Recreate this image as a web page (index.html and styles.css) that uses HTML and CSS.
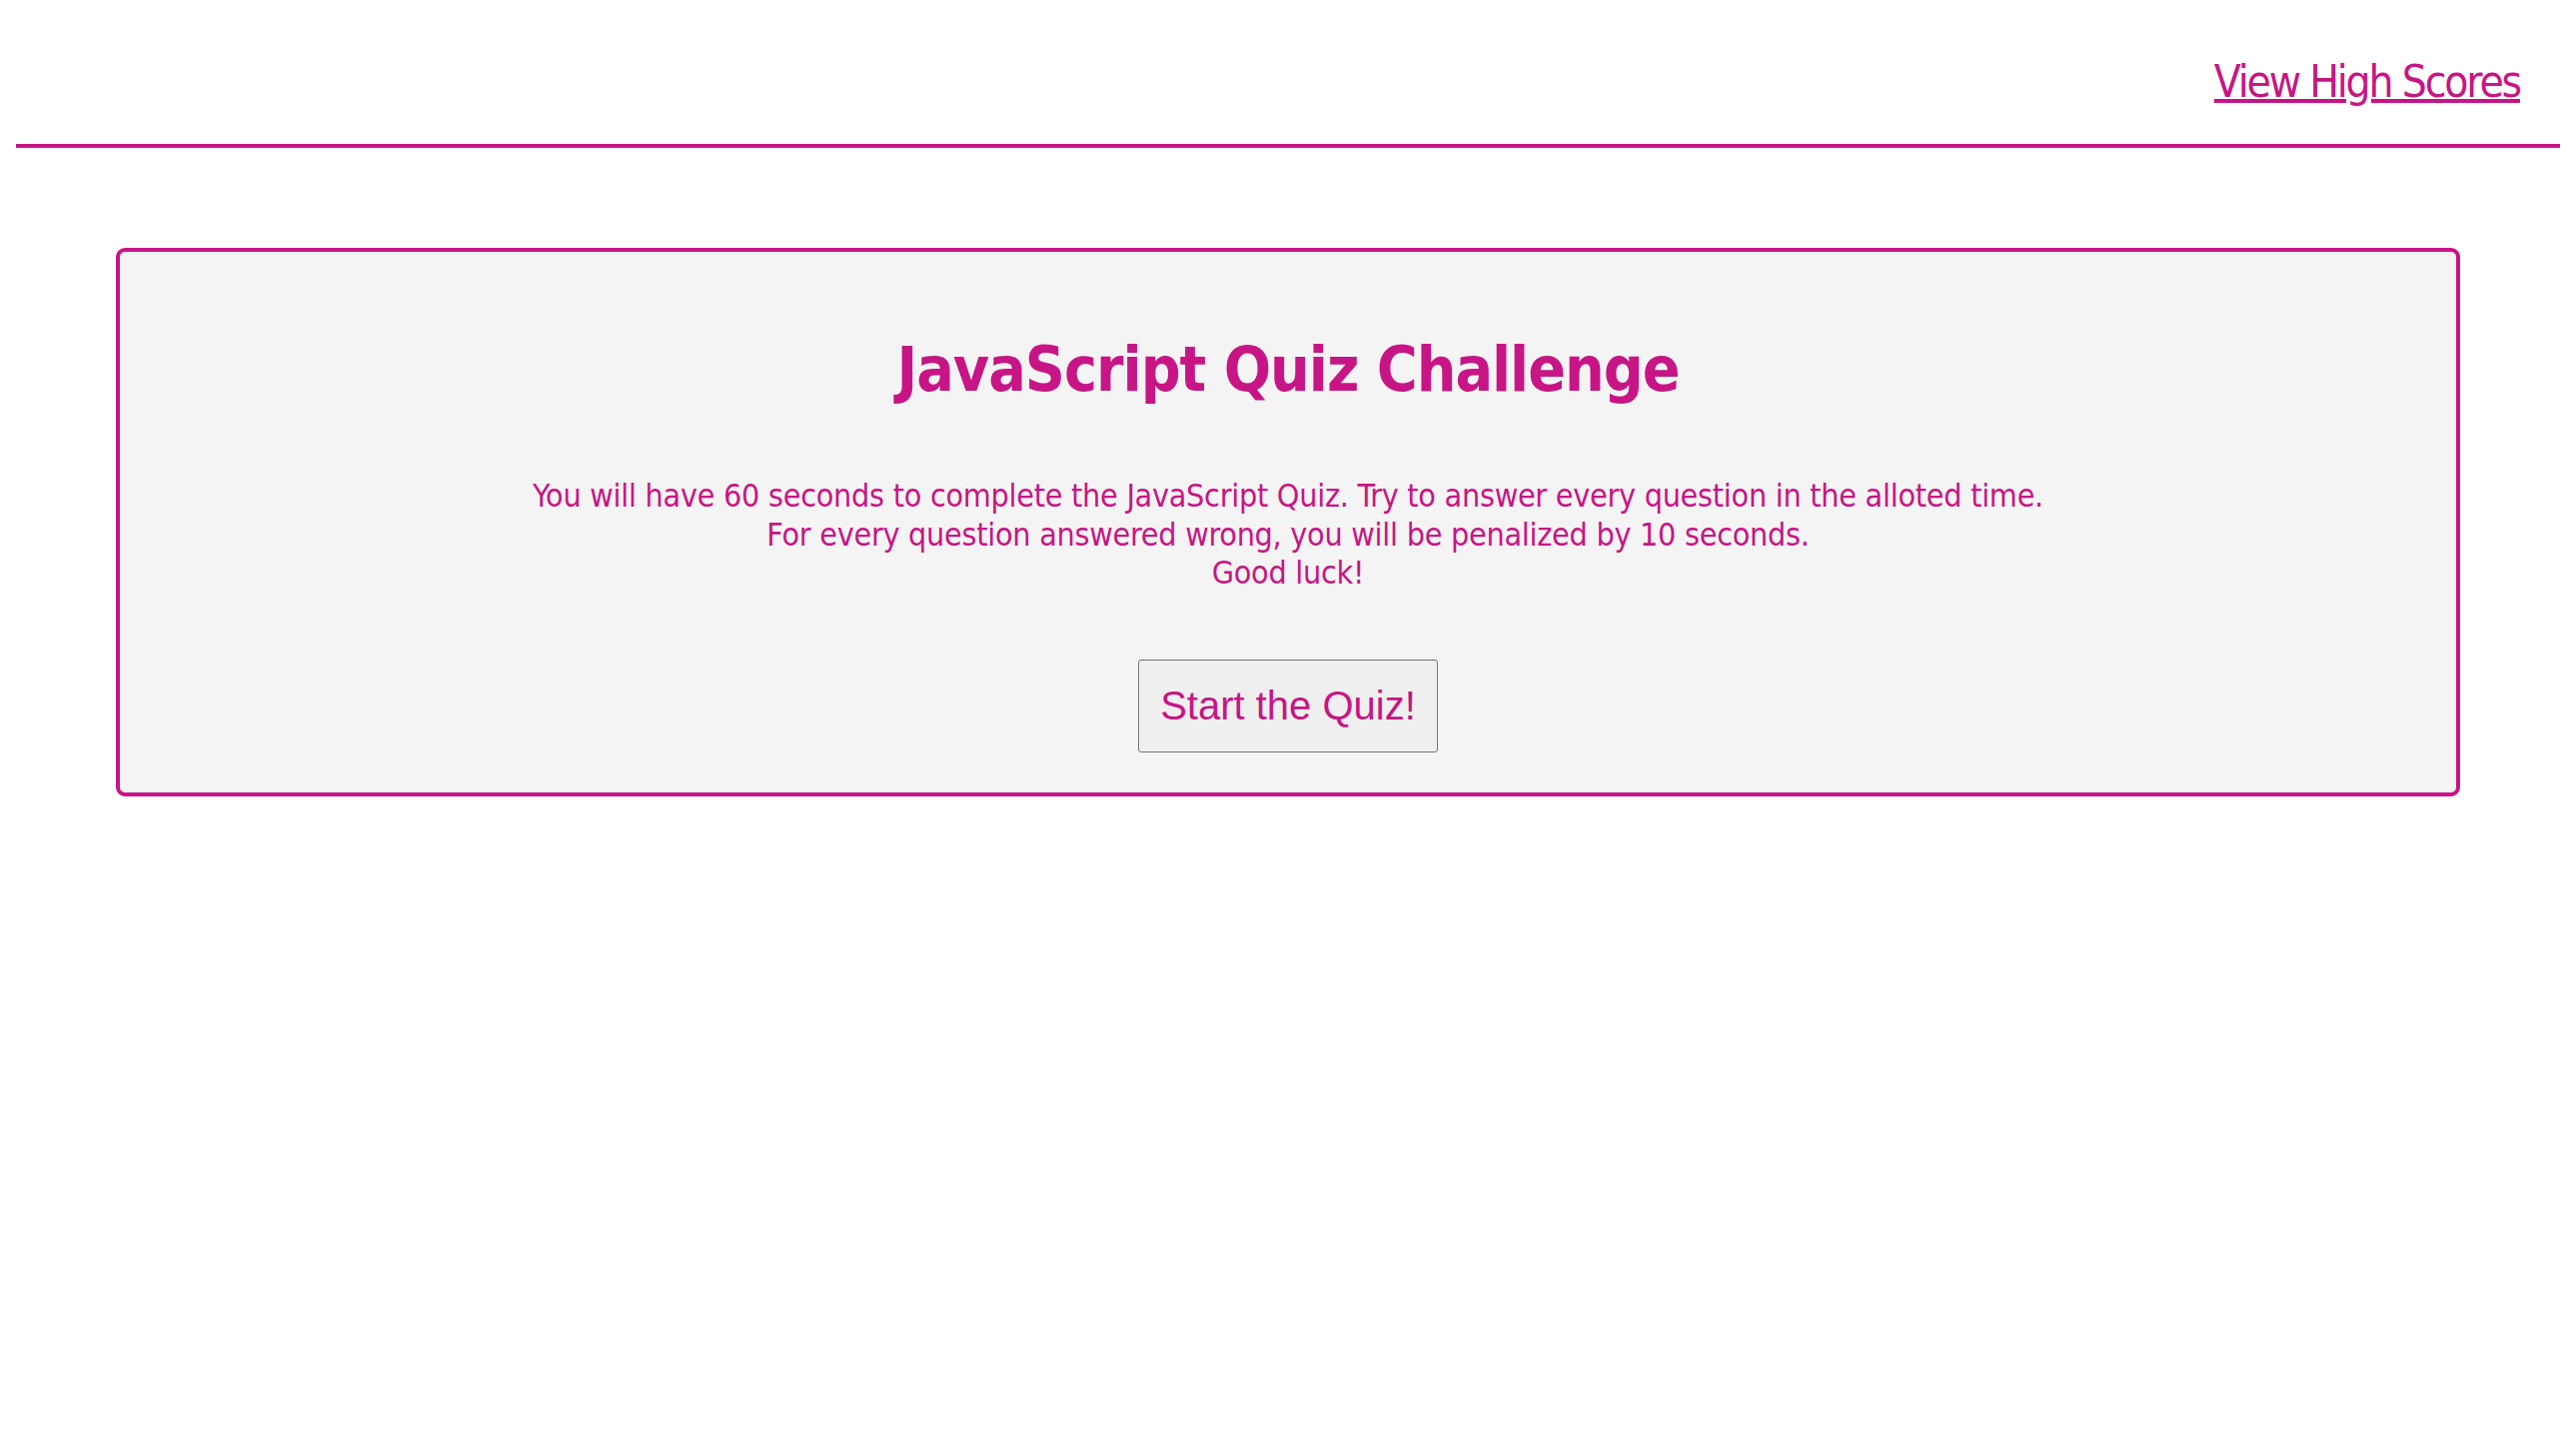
FILE: index.html
```html
<!DOCTYPE html>
<html lang="en">
<head>
<meta charset="utf-8">
<title>JavaScript Quiz Challenge</title>
<link rel="stylesheet" href="styles.css">
</head>
<body>
<header class="top-bar">
  <a class="scores-link" href="#">View High Scores</a>
</header>
<main class="quiz-card">
  <h1 class="quiz-title">JavaScript Quiz Challenge</h1>
  <p class="quiz-intro">You will have 60 seconds to complete the JavaScript Quiz. Try to answer every question in the alloted time.<br>For every question answered wrong, you will be penalized by 10 seconds.<br>Good luck!</p>
  <button class="start-btn" type="button">Start the Quiz!</button>
</main>
</body>
</html>
```
FILE: styles.css
```css
html, body {
  background: #ffffff;
}
body {
  margin: 0;
  padding: 0 16px;
  font-family: "DejaVu Sans Condensed", "DejaVu Sans", sans-serif;
  color: #c71585;
}
.top-bar {
  display: flex;
  justify-content: flex-end;
  padding: 56px 40px 36px 0;
  border-bottom: 4px solid #c71585;
}
.scores-link {
  font-size: 44px;
  line-height: 52px;
  letter-spacing: -2.2px;
  color: #c71585;
  text-decoration: underline;
  text-decoration-thickness: 4px;
  text-underline-offset: 2px;
}
.quiz-card {
  margin: 100px 100px 0;
  background: #f4f4f4;
  border: 4px solid #c71585;
  border-radius: 9px;
  padding: 80px 20px 40px;
  display: flex;
  flex-direction: column;
  align-items: center;
  text-align: center;
}
.quiz-title {
  margin: 0;
  font-size: 62px;
  line-height: 76px;
  letter-spacing: -1px;
  font-weight: bold;
}
.quiz-intro {
  margin: 69px 0 0;
  font-size: 32px;
  line-height: 38.5px;
  letter-spacing: -0.27px;
}
.start-btn {
  margin-top: 67px;
  font-family: "Liberation Sans", Arial, sans-serif;
  font-size: 40px;
  line-height: 47px;
  letter-spacing: 0;
  color: #c71585;
  background: #efefef;
  border: 1px solid #767676;
  border-radius: 3px;
  padding: 22px 21px;
}
```
